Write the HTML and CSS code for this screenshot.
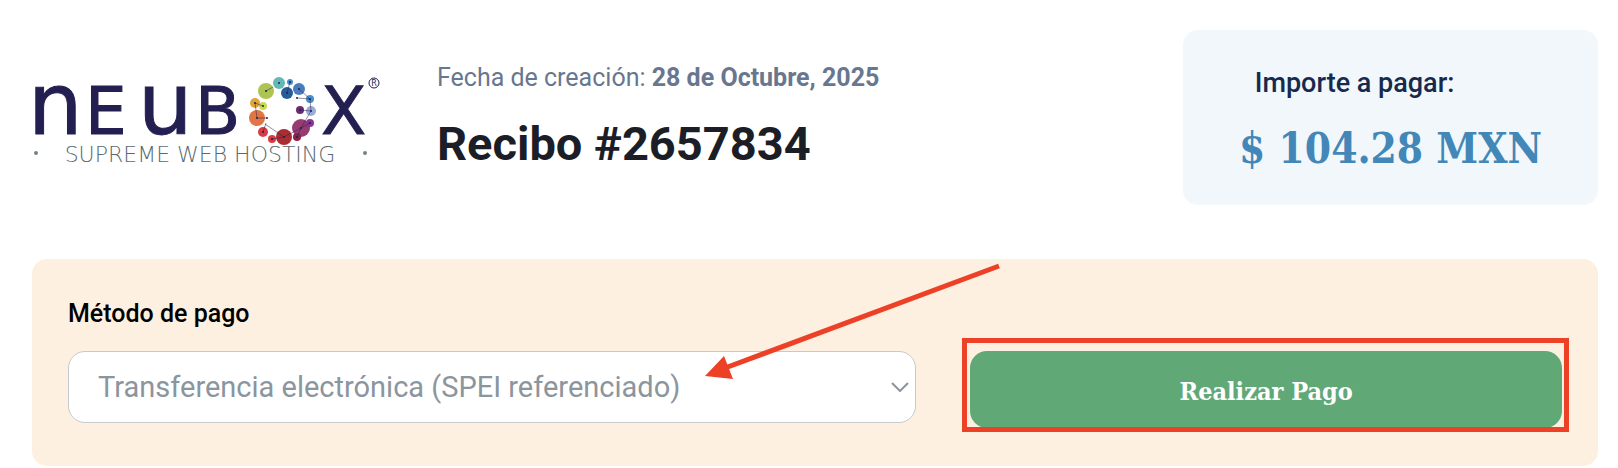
FILE: index.html
```html
<!DOCTYPE html>
<html lang="es">
<head>
    <meta charset="UTF-8">
    <meta name="viewport" content="width=device-width, initial-scale=1.0">
    <title>Recibo #2657834</title>
    <link rel="stylesheet" href="styles.css">
</head>
<body>
    <header class="header">
        <svg class="logo" viewBox="0 0 350 86" role="img" aria-label="NEUBOX Supreme Web Hosting">
            <g class="logo-name">
                <text class="logo-tall" x="-4" y="59">n</text>
                <text x="53" y="59">E</text>
                <text class="logo-tall" x="106" y="59">u</text>
                <text x="163" y="59">B</text>
                <text x="289" y="59">X</text>
            </g>
            <!-- ring of dots -->
            <circle cx="234" cy="16" r="8" fill="#adc453"/>
            <circle cx="247" cy="8" r="6" fill="#63b9b6"/>
            <circle cx="258" cy="7" r="3" fill="#4590cc"/>
            <circle cx="267" cy="14" r="6" fill="#4a7dbd"/>
            <circle cx="255" cy="18" r="6" fill="#285c98"/>
            <circle cx="278" cy="24" r="4" fill="#4590cc"/>
            <circle cx="279" cy="36" r="5" fill="#9bacd6"/>
            <circle cx="268" cy="35" r="4" fill="#6b2b71"/>
            <circle cx="223" cy="28" r="5" fill="#e0a438"/>
            <circle cx="231" cy="31" r="4" fill="#cbd94d"/>
            <circle cx="225" cy="43" r="8" fill="#e17543"/>
            <circle cx="231" cy="57" r="5" fill="#d83b40"/>
            <circle cx="240" cy="64" r="4" fill="#d83b40"/>
            <circle cx="252" cy="62" r="8" fill="#a92e31"/>
            <circle cx="269" cy="53" r="9" fill="#963c70"/>
            <circle cx="278" cy="48" r="4" fill="#8d3390"/>
            <circle cx="265" cy="62" r="4" fill="#8a2348"/>
            <path class="logo-links" d="M234 16l7-4M255 18l3-11M267 14l11 10-13-1M278 24l1 12-11-1M223 28l8 3M223 28l2 15h10M231 57l3-9M233 49l19 13-12 2M252 62l17-9 9-5M265 62l4-9 10-17"/>
            <g fill="#231f51">
                <circle cx="234" cy="16" r="1"/>
                <circle cx="247" cy="8" r="1"/>
                <circle cx="258" cy="7" r="1"/>
                <circle cx="267" cy="14" r="1"/>
                <circle cx="255" cy="18" r="1"/>
                <circle cx="265" cy="23" r="1"/>
                <circle cx="278" cy="24" r="1"/>
                <circle cx="279" cy="36" r="1"/>
                <circle cx="268" cy="35" r="1"/>
                <circle cx="223" cy="28" r="1"/>
                <circle cx="231" cy="31" r="1"/>
                <circle cx="225" cy="43" r="1"/>
                <circle cx="235" cy="43" r="1"/>
                <circle cx="231" cy="57" r="1"/>
                <circle cx="240" cy="64" r="1"/>
                <circle cx="252" cy="62" r="1"/>
                <circle cx="269" cy="53" r="1"/>
                <circle cx="278" cy="48" r="1"/>
                <circle cx="265" cy="62" r="1"/>
            </g>
            <circle class="logo-mark" cx="342" cy="8" r="5"/>
            <text class="logo-r" x="342" y="11">R</text>
            <circle cx="4" cy="78" r="2" fill="#73828a"/>
            <text class="logo-tagline" x="168" y="87">SUPREME WEB HOSTING</text>
            <circle cx="333" cy="78" r="2" fill="#73828a"/>
        </svg>

        <div class="receipt">
            <p class="date">Fecha de creación: <strong>28 de Octubre, 2025</strong></p>
            <h1>Recibo #2657834</h1>
        </div>

        <div class="amount">
            <p class="amount-label">Importe a pagar:</p>
            <p class="amount-total">$ 104.28 MXN</p>
        </div>
    </header>

    <form class="payment">
        <div class="method">
            <label for="metodo">Método de pago</label>
            <div class="select-box">
                <select id="metodo" name="metodo">
                    <option>Transferencia electrónica (SPEI referenciado)</option>
                </select>
                <svg class="chevron" viewBox="0 0 18 10" aria-hidden="true">
                    <path d="M1 1l8 8 8-8"/>
                </svg>
            </div>
            <svg class="arrow" viewBox="0 0 296 116" aria-hidden="true">
                <path class="arrow-line" d="M294 3L20 105"/>
                <path class="arrow-head" d="M0 113l19-20 9 23z"/>
            </svg>
        </div>
        <div class="pay">
            <button type="submit">Realizar Pago</button>
            <span class="highlight"></span>
        </div>
    </form>
</body>
</html>
```

FILE: styles.css
```css
* {
    box-sizing: border-box;
}
body {
    margin: 0;
    padding: 30px 20px 0 32px;
    background-color: #fff;
    font-family: Roboto, sans-serif;
}
p, h1 {
    margin: 0;
}
.header {
    display: flex;
    align-items: center;
    margin-bottom: 54px;
}
.logo {
    width: 350px;
    flex-shrink: 0;
    overflow: visible;
}
.logo-name {
    fill: #231f51;
    stroke: #231f51;
    stroke-width: 1px;
    font-family: "DejaVu Sans", sans-serif;
    font-size: 66px;
}
.logo-tall {
    font-size: 86px;
}
.logo-links {
    fill: none;
    stroke: #231f51;
    stroke-width: 1px;
    opacity: 0.5;
}
.logo-mark {
    fill: none;
    stroke: #231f51;
}
.logo-r {
    fill: #231f51;
    font-family: "DejaVu Sans", sans-serif;
    font-size: 8px;
    text-anchor: middle;
}
.logo-tagline {
    fill: #5a6a72;
    font-family: "DejaVu Sans", sans-serif;
    font-size: 22px;
    font-weight: 200;
    text-anchor: middle;
}
.receipt {
    flex: 1;
    margin-left: 55px;
    padding-bottom: 2px;
}
.date {
    color: #68778f;
    font-size: 25px;
    line-height: 32px;
}
h1 {
    margin-top: 22px;
    color: #1b1e26;
    font-size: 47px;
    line-height: 56px;
}
.amount {
    padding: 37px 56px 20px;
    border-radius: 15px;
    background-color: #f1f7fb;
    text-align: center;
}
.amount-label {
    padding-right: 72px;
    color: #172a4d;
    font-size: 27px;
    font-weight: 500;
    line-height: 32px;
}
.amount-total {
    padding-top: 14px;
    color: #4287b8;
    font-family: "DejaVu Serif Condensed", "DejaVu Serif", serif;
    font-size: 42px;
    font-weight: bold;
    line-height: 72px;
}
.payment {
    display: grid;
    grid-template-columns: 43fr 30fr;
    align-items: end;
    gap: 54px;
    padding: 39px 36px 38px;
    border-radius: 15px;
    background-color: #fdf0e0;
}
.method {
    position: relative;
    padding-bottom: 5px;
}
label {
    display: block;
    margin-bottom: 21px;
    color: #000;
    font-size: 25px;
    font-weight: 500;
    line-height: 32px;
}
.select-box {
    position: relative;
}
select {
    display: block;
    width: 100%;
    height: 72px;
    padding: 0 50px 0 29px;
    border: 1px solid #c6c9cd;
    border-radius: 17px;
    background-color: #fff;
    color: #8b959e;
    font-family: inherit;
    font-size: 29px;
    appearance: none;
}
.chevron {
    position: absolute;
    top: 31px;
    right: 7px;
    width: 18px;
    fill: none;
    stroke: #8b959e;
    stroke-width: 2px;
    pointer-events: none;
}
.arrow {
    position: absolute;
    top: -35px;
    right: -85px;
    width: 296px;
    pointer-events: none;
}
.arrow-line {
    stroke: #ec4127;
    stroke-width: 5px;
}
.arrow-head {
    fill: #ec4127;
}
.pay {
    position: relative;
}
button {
    display: block;
    width: 100%;
    height: 77px;
    padding-top: 4px;
    border: none;
    border-radius: 17px;
    background-color: #61a877;
    color: #fff;
    font-family: "DejaVu Serif Condensed", "DejaVu Serif", serif;
    font-size: 25px;
    font-weight: bold;
    cursor: pointer;
}
.highlight {
    position: absolute;
    inset: -13px -7px -4px -8px;
    border: 5px solid #ec4127;
    pointer-events: none;
}
```
